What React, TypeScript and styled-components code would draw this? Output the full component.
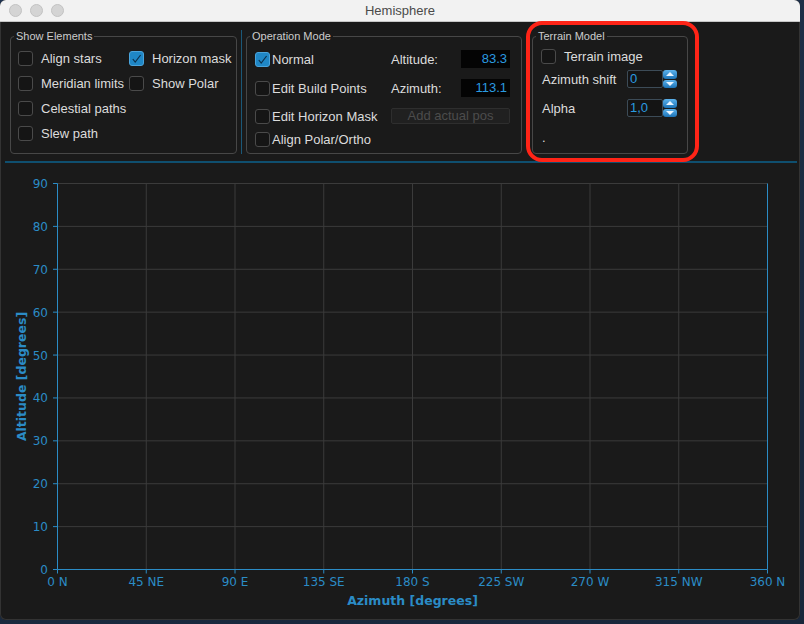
import React from 'react';
import styled, { createGlobalStyle } from 'styled-components';

const Global = createGlobalStyle`
  html, body { margin: 0; padding: 0; }
  body {
    width: 804px; height: 624px; overflow: hidden;
    background: #1c2b40;
    font-family: "Liberation Sans", Arial, sans-serif;
  }
`;

const Desktop = styled.div`
  width: 804px;
  height: 624px;
  background: linear-gradient(160deg, #1f3350 0%, #1a2a3f 60%, #18263a 100%);
`;

const Window = styled.div`
  position: relative;
  width: 800px;
  height: 620px;
  background: #1a1a1a;
  border-radius: 6px;
  overflow: hidden;
  display: flex;
  flex-direction: column;
  box-shadow: inset 0 0 0 1px #333;
`;

const TitleBar = styled.div`
  height: 21px;
  flex: none;
  background: #f2f2f2;
  border-bottom: 1px solid #c6c6c6;
  display: grid;
  grid-template-columns: 1fr auto 1fr;
  align-items: center;
`;

const Lights = styled.div`
  display: flex;
  gap: 8px;
  padding-left: 9px;
`;

const Light = styled.span`
  width: 11px;
  height: 11px;
  border-radius: 50%;
  background: #d4d4d4;
  border: 1px solid #c2c2c2;
`;

const Title = styled.div`
  font-size: 13px;
  color: #4a4a4a;
  line-height: 21px;
`;

const TopRow = styled.div`
  display: flex;
  padding: 8px 0 0 10px;
  height: 124px;
  flex: none;
`;

const Group = styled.fieldset<{ $w: number }>`
  margin: 0;
  padding: 0;
  min-width: 0;
  width: ${p => p.$w}px;
  height: 124px;
  box-sizing: border-box;
  border: 1px solid #474747;
  border-radius: 4px;
`;

const Legend = styled.legend`
  margin-left: 3px;
  padding: 0 2px;
  font-size: 11px;
  line-height: 13px;
  color: #cccccc;
`;

const VSep = styled.div`
  width: 1px;
  margin: 0 4px;
  background: #1b5878;
`;

const Gap = styled.div`
  width: 10px;
`;

const ShowGrid = styled.div`
  display: grid;
  grid-template-columns: 111px auto;
  grid-auto-rows: 25px;
  padding: 3px 0 0 7px;
`;

const Item = styled.label<{ $gap?: number }>`
  display: flex;
  align-items: center;
  gap: ${p => p.$gap ?? 8}px;
  font-size: 13px;
  color: #dcdcdc;
  white-space: nowrap;
`;

const Box = styled.span<{ $on?: boolean }>`
  width: 15px;
  height: 15px;
  box-sizing: border-box;
  border-radius: 3px;
  flex: none;
  background: ${p => (p.$on ? '#1f87c6' : '#151515')};
  border: 1px solid ${p => (p.$on ? '#4aa4dc' : '#4a4a4a')};
  display: flex;
  align-items: center;
  justify-content: center;
`;

const Check: React.FC<{ on?: boolean }> = ({ on }) => (
  <Box $on={on}>
    {on && (
      <svg width="13" height="13" viewBox="0 0 13 13">
        <path d="M2.8 7 L5.2 10 L10.6 3" fill="none" stroke="#0c2f4a" strokeWidth="1.2" />
      </svg>
    )}
  </Box>
);

const OpGrid = styled.div`
  display: grid;
  grid-template-columns: 136px 70px 49px;
  grid-template-rows: 26px 32px 24px 22px;
  align-items: center;
  padding: 3px 0 0 8px;
`;

const FieldLabel = styled.span`
  font-size: 13px;
  color: #dcdcdc;
`;

const Value = styled.div`
  height: 18px;
  background: #040404;
  color: #2a9be0;
  font-size: 13px;
  line-height: 18px;
  text-align: right;
  padding-right: 3px;
`;

const GhostButton = styled.div`
  grid-column: 2 / 4;
  height: 16px;
  box-sizing: border-box;
  border: 1px solid #2e2e2e;
  background: #202020;
  border-radius: 2px;
  color: #4c4c4c;
  font-size: 13px;
  line-height: 14px;
  text-align: center;
`;

const TerrainGrid = styled.div`
  display: grid;
  grid-template-columns: 85px 50px;
  grid-template-rows: 22px 24px 34px 24px;
  align-items: center;
  padding: 2px 0 0 9px;
`;

const TerrainCheck = styled.div`
  grid-column: 1 / 3;
  margin-left: -1px;
`;

const Spin = styled.div`
  display: flex;
  height: 18px;
`;

const SpinField = styled.div`
  width: 36px;
  box-sizing: border-box;
  background: #141414;
  border: 1px solid #3c4b57;
  border-radius: 2px;
  color: #2a9be0;
  font-size: 13px;
  line-height: 16px;
  padding-left: 2px;
`;

const SpinArrows = styled.div`
  width: 14px;
  display: flex;
  flex-direction: column;
  gap: 1px;
`;

const Arrow = styled.div<{ $down?: boolean }>`
  flex: 1;
  border-radius: 3px;
  background: linear-gradient(#5cb2ec, #1b72b6);
  display: flex;
  align-items: center;
  justify-content: center;
  &::after {
    content: '';
    width: 0;
    height: 0;
    border-left: 4px solid transparent;
    border-right: 4px solid transparent;
    ${p => (p.$down ? 'border-top: 4px solid #e8f4ff;' : 'border-bottom: 4px solid #e8f4ff;')}
  }
`;

const Dot = styled.span`
  font-size: 13px;
  color: #dcdcdc;
  line-height: 13px;
`;

const Annotation = styled.div`
  position: absolute;
  left: 526px;
  top: 21px;
  width: 173px;
  height: 141px;
  box-sizing: border-box;
  border: 4px solid #ff2417;
  border-radius: 16px;
  pointer-events: none;
`;

const HRule = styled.div`
  height: 2px;
  margin: 7px 3px 0 5px;
  background: #0f4f6f;
  flex: none;
`;

const ChartWrap = styled.div`
  flex: 1;
  display: flex;
`;

const BLUE = '#2b8cc6';
const GRID = '#3b3b3b';

const Chart: React.FC = () => {
  const L = 57.5, T = 20.5, R = 767.5, B = 406.5;
  const xs = Array.from({ length: 9 }, (_, i) => L + (i * (R - L)) / 8);
  const ys = Array.from({ length: 10 }, (_, i) => B - (i * (B - T)) / 9);
  const xl = ['0 N', '45 NE', '90 E', '135 SE', '180 S', '225 SW', '270 W', '315 NW', '360 N'];
  return (
    <svg width="800" height="457" viewBox="0 0 800 457" style={{ display: 'block' }}>
      <g fontFamily="'DejaVu Sans', sans-serif" fontSize="12" fill={BLUE}>
        {xs.slice(1, 8).map((x, i) => (
          <line key={'gx' + i} x1={x} y1={T} x2={x} y2={B} stroke={GRID} strokeWidth="1" />
        ))}
        {ys.slice(1).map((y, i) => (
          <line key={'gy' + i} x1={L} y1={y} x2={R} y2={y} stroke={GRID} strokeWidth="1" />
        ))}
        <line x1={L} y1={T} x2={L} y2={B} stroke={BLUE} strokeWidth="1" />
        <line x1={R} y1={T} x2={R} y2={B} stroke={BLUE} strokeWidth="1" />
        <line x1={L} y1={B} x2={R} y2={B} stroke={BLUE} strokeWidth="1" />
        {ys.map((y, i) => (
          <g key={'ty' + i}>
            <line x1={53} y1={y} x2={L} y2={y} stroke={BLUE} strokeWidth="1" />
            <text x={48} y={y + 4.5} textAnchor="end">{i * 10}</text>
          </g>
        ))}
        {xs.map((x, i) => (
          <g key={'tx' + i}>
            <line x1={x} y1={B} x2={x} y2={B + 4} stroke={BLUE} strokeWidth="1" />
            <text x={x} y={423} textAnchor="middle">{xl[i]}</text>
          </g>
        ))}
        <text x={412.5} y={441.5} textAnchor="middle" fontWeight="bold" fontSize="12.5">
          Azimuth [degrees]
        </text>
        <text
          x={0}
          y={0}
          transform="translate(25.5 213.5) rotate(-90)"
          textAnchor="middle"
          fontWeight="bold"
          fontSize="12.5"
        >
          Altitude [degrees]
        </text>
      </g>
    </svg>
  );
};

export default function App() {
  return (
    <Desktop>
      <Global />
      <Window>
        <TitleBar>
          <Lights>
            <Light />
            <Light />
            <Light />
          </Lights>
          <Title>Hemisphere</Title>
          <div />
        </TitleBar>
        <TopRow>
          <Group $w={227}>
            <Legend>Show Elements</Legend>
            <ShowGrid>
              <Item><Check />Align stars</Item>
              <Item><Check on />Horizon mask</Item>
              <Item><Check />Meridian limits</Item>
              <Item><Check />Show Polar</Item>
              <Item><Check />Celestial paths</Item>
              <div />
              <Item><Check />Slew path</Item>
            </ShowGrid>
          </Group>
          <VSep />
          <Group $w={276}>
            <Legend>Operation Mode</Legend>
            <OpGrid>
              <Item $gap={2}><Check on />Normal</Item>
              <FieldLabel>Altitude:</FieldLabel>
              <Value>83.3</Value>
              <Item $gap={2}><Check />Edit Build Points</Item>
              <FieldLabel>Azimuth:</FieldLabel>
              <Value>113.1</Value>
              <Item $gap={2}><Check />Edit Horizon Mask</Item>
              <GhostButton>Add actual pos</GhostButton>
              <Item $gap={2}><Check />Align Polar/Ortho</Item>
            </OpGrid>
          </Group>
          <Gap />
          <Group $w={156}>
            <Legend>Terrain Model</Legend>
            <TerrainGrid>
              <TerrainCheck>
                <Item><Check />Terrain image</Item>
              </TerrainCheck>
              <FieldLabel>Azimuth shift</FieldLabel>
              <Spin>
                <SpinField>0</SpinField>
                <SpinArrows><Arrow /><Arrow $down /></SpinArrows>
              </Spin>
              <FieldLabel>Alpha</FieldLabel>
              <Spin>
                <SpinField>1,0</SpinField>
                <SpinArrows><Arrow /><Arrow $down /></SpinArrows>
              </Spin>
              <Dot>.</Dot>
            </TerrainGrid>
          </Group>
        </TopRow>
        <HRule />
        <ChartWrap>
          <Chart />
        </ChartWrap>
        <Annotation />
      </Window>
    </Desktop>
  );
}
